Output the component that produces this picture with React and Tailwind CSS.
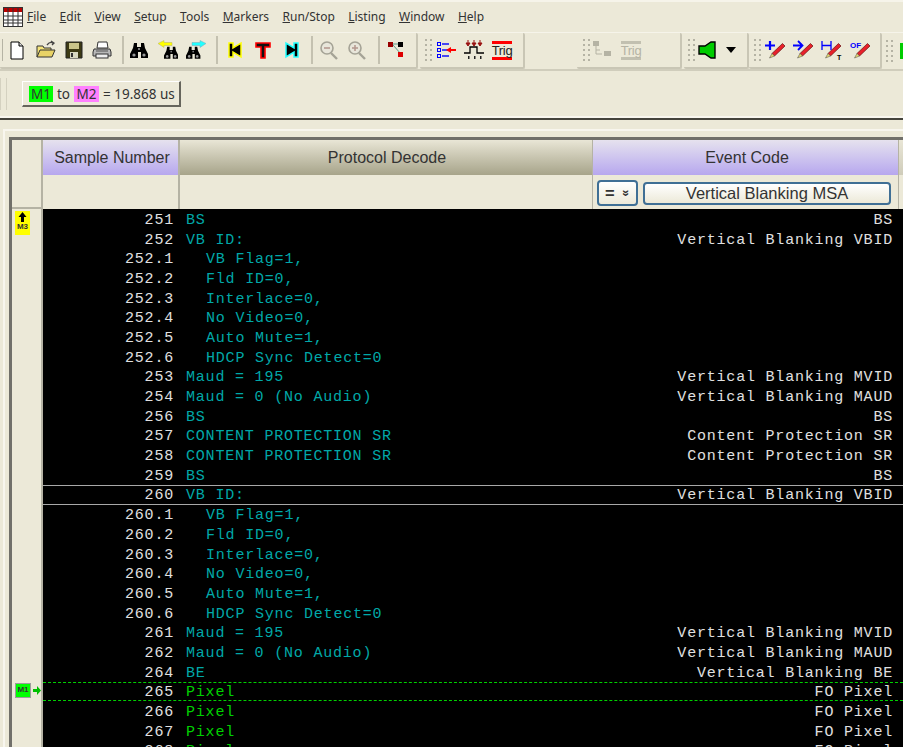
import { Fragment } from 'react';

const menus = [
    ['F', 'ile'], ['E', 'dit'], ['V', 'iew'], ['S', 'etup'], ['T', 'ools'],
    ['M', 'arkers'], ['R', 'un/Stop'], ['L', 'isting'], ['W', 'indow'], ['H', 'elp'],
];

const rows = [
    ['251', 'BS', 'BS'],
    ['252', 'VB ID:', 'Vertical Blanking VBID'],
    ['252.1', 'VB Flag=1,', '', true],
    ['252.2', 'Fld ID=0,', '', true],
    ['252.3', 'Interlace=0,', '', true],
    ['252.4', 'No Video=0,', '', true],
    ['252.5', 'Auto Mute=1,', '', true],
    ['252.6', 'HDCP Sync Detect=0', '', true],
    ['253', 'Maud = 195', 'Vertical Blanking MVID'],
    ['254', 'Maud = 0 (No Audio)', 'Vertical Blanking MAUD'],
    ['256', 'BS', 'BS'],
    ['257', 'CONTENT PROTECTION SR', 'Content Protection SR'],
    ['258', 'CONTENT PROTECTION SR', 'Content Protection SR'],
    ['259', 'BS', 'BS'],
    ['260', 'VB ID:', 'Vertical Blanking VBID', false, 'selected'],
    ['260.1', 'VB Flag=1,', '', true],
    ['260.2', 'Fld ID=0,', '', true],
    ['260.3', 'Interlace=0,', '', true],
    ['260.4', 'No Video=0,', '', true],
    ['260.5', 'Auto Mute=1,', '', true],
    ['260.6', 'HDCP Sync Detect=0', '', true],
    ['261', 'Maud = 195', 'Vertical Blanking MVID'],
    ['262', 'Maud = 0 (No Audio)', 'Vertical Blanking MAUD'],
    ['264', 'BE', 'Vertical Blanking BE'],
    ['265', 'Pixel', 'FO Pixel', false, 'marker'],
    ['266', 'Pixel', 'FO Pixel', false, 'pixel'],
    ['267', 'Pixel', 'FO Pixel', false, 'pixel'],
    ['268', 'Pixel', 'FO Pixel', false, 'pixel'],
];

// Dotted grab handle at the start of each toolbar
const Grip = ({ className = '' }) => (
    <svg width="7" height="24" className={`shrink-0 ${className}`}>
        {[2, 7, 12, 17, 22].map((y) => (
            <Fragment key={y}>
                <rect x="0" y={y - 1} width="2" height="2" fill="#b5b3a4" />
                <rect x="5" y={y - 1} width="2" height="2" fill="#b5b3a4" />
            </Fragment>
        ))}
    </svg>
);

const Sep = ({ className = '' }) => <div className={`w-[2px] h-[28px] bg-[#c4c1b0] shrink-0 ${className}`}></div>;

const Ico = ({ w = 20, children, className = '' }) => (
    <svg width={w} height="20" viewBox={`0 0 ${w} 20`} className={`shrink-0 ${className}`}>{children}</svg>
);

const NewDoc = ({ className }) => (
    <Ico w={14} className={className}><path d="M1 2h8l4 4v13H1z" fill="#fff" stroke="#000" /><path d="M9 2v4h4" fill="#ddd" stroke="#000" /></Ico>
);
const OpenDoc = ({ className }) => (
    <Ico className={className}>
        <path d="M1 17V6h6l1 2h7v2" fill="#f5e47a" stroke="#333" />
        <path d="M1 17l3-7h15l-3 7z" fill="#e8d266" stroke="#333" />
        <path d="M11 5q3-4 6-2M15 1l3 2-2 2" fill="none" stroke="#444" strokeWidth="1.3" />
    </Ico>
);
const Save = ({ className }) => (
    <Ico w={18} className={className}>
        <path d="M1 2h16v16H1z" fill="#3d3a14" stroke="#222" />
        <rect x="4" y="3" width="10" height="6" fill="#c9c48a" />
        <rect x="5" y="12" width="8" height="6" fill="#d8d8c0" />
        <rect x="6" y="13" width="2" height="4" fill="#333" />
    </Ico>
);
const Print = ({ className }) => (
    <Ico className={className}>
        <path d="M6 2h9l1 6H5z" fill="#fff" stroke="#333" />
        <path d="M2 9h16l1 3v4H1v-4z" fill="#b8b8b8" stroke="#333" />
        <rect x="4" y="14" width="12" height="4" fill="#eee" stroke="#333" />
        <path d="M4 11h12" stroke="#555" />
    </Ico>
);
// Two barrels on a narrow bridge, big round lenses below
const Binoc = ({ x = 0, y = 0, s = 1 }) => (
    <g transform={`translate(${x} ${y}) scale(${s})`}>
        <path d="M4 1h3v4h4V1h3l1 5 3 6v4h-7v-6H8v6H0v-4l3-6z" fill="#000" />
        <circle cx="4" cy="13" r="1.600" fill="#9a9a9a" />
        <circle cx="14" cy="13" r="1.600" fill="#9a9a9a" />
        <rect x="8" y="6" width="2" height="2" fill="#777" />
    </g>
);
const FindBack = ({ className }) => (
    <Ico className={className}><Binoc x={6} y={6} s={0.8} /><path d="M0 3.500l6-3v2h8v3H6v2z" fill="#ff0" stroke="#b5b36a" strokeWidth="0.5" /></Ico>
);
const FindNext = ({ className }) => (
    <Ico className={className}><Binoc x={0} y={6} s={0.8} /><path d="M20 3.500l-6-3v2H6v3h8v2z" fill="#2ff" stroke="#7ab" strokeWidth="0.5" /></Ico>
);
const JumpFirst = ({ className }) => (
    <Ico w={16} className={className}><path d="M2 3h4v5l8-5v14l-8-5v5H2z" fill="#000" stroke="#ff0" strokeWidth="1.5" /></Ico>
);
const JumpTrig = ({ className }) => (
    <Ico w={16} className={className}><path d="M1 3h14v4h-5v11H6V7H1z" fill="#111" stroke="#f00" strokeWidth="1.6" /></Ico>
);
const JumpLast = ({ className }) => (
    <Ico w={16} className={className}><path d="M14 3h-4v5L2 3v14l8-5v5h4z" fill="#000" stroke="#2ff" strokeWidth="1.5" /></Ico>
);
const Zoom = ({ plus, className }) => (
    <Ico w={18} className={className}>
        <circle cx="7" cy="8" r="6" fill="#e8e6da" stroke="#a5a396" strokeWidth="1.6" />
        <path d="M11 13l6 6" stroke="#a5a396" strokeWidth="2.4" />
        <path d="M4 8h6" stroke="#b59a90" strokeWidth="1.6" />
        {plus && <path d="M7 5v6" stroke="#b59a90" strokeWidth="1.6" />}
    </Ico>
);
const Nodes = ({ className }) => (
    <Ico w={16} className={className}>
        <path d="M3 4l10 0M5 5l8 9" stroke="#5a9a8a" />
        <rect x="0" y="2" width="5" height="5" fill="#900" />
        <rect x="10" y="2" width="5" height="5" fill="#000" />
        <rect x="10" y="12" width="5" height="5" fill="#d00" />
    </Ico>
);
const Steps = ({ className }) => (
    <Ico className={className}>
        {[4, 10, 16].map((y) => (
            <Fragment key={y}>
                <rect x="1.500" y={y - 1.5} width="3" height="3" fill="none" stroke="#00f" />
                <path d={`M6 ${y}h7`} stroke="#00f" strokeWidth="1.4" />
            </Fragment>
        ))}
        <path d="M10 10l5-3v2h5v2h-5v2z" fill="#f00" />
    </Ico>
);
const Pulse = ({ className }) => (
    <Ico className={className}>
        <path d="M0 13h6V7h7v6h7" fill="none" stroke="#000" strokeWidth="1.3" />
        {[4, 10, 16].map((x) => (
            <path key={x} d={`M${x} 0v3M${x - 2} 3l2 3 2-3z`} stroke="#911" fill="#911" />
        ))}
        {[4, 10, 16].map((x) => <rect key={x} x={x} y="16" width="1.500" height="3" fill="#222" />)}
    </Ico>
);
const TrigIco = ({ gray, className = '' }) => (
    <span className={`w-[20px] h-[19px] shrink-0 flex items-center justify-center text-[13px] tracking-[-0.3px] leading-none border-y-[3px] ${gray ? 'text-[#b5b3a4] border-[#c2c0b0]' : 'text-[#222] border-[#f00]'} ${className}`}>Trig</span>
);
const GrayTree = ({ className }) => (
    <Ico className={className}>
        <rect x="1" y="1" width="6" height="5" fill="#b5b3a4" />
        <path d="M4 6v8h6M4 10h4" stroke="#b5b3a4" fill="none" />
        <rect x="12" y="11" width="7" height="5" fill="#b5b3a4" />
    </Ico>
);
const Speaker = ({ className }) => (
    <Ico w={18} className={className}><path d="M1 6h6l6-4h4v16h-4l-6-4H1z" fill="#0c0" stroke="#000" strokeWidth="1.4" /></Ico>
);
// Slim red pencil, tip low on the left
const Pencil = () => (
    <g>
        <path d="M17.500 3.500l2.500 2.500L9.500 16 7 13.500z" fill="#e8202a" stroke="#611" strokeWidth="0.7" />
        <path d="M7 13.500l2.500 2.500L4.500 18z" fill="#e8d870" stroke="#444" strokeWidth="0.5" />
    </g>
);
const PenPlus = ({ className }) => (
    <Ico w={21} className={className}><path d="M5 1v9M0 5.500h10" stroke="#00f" strokeWidth="2.200" /><Pencil /></Ico>
);
const PenArrow = ({ className }) => (
    <Ico w={21} className={className}><path d="M0 5.500h9M5 1l4.500 4.500L5 10" fill="none" stroke="#00f" strokeWidth="1.800" /><Pencil /></Ico>
);
const PenWidth = ({ className }) => (
    <Ico w={22} className={className}>
        <path d="M1 1v9M10 1v9M1 5.500h9" stroke="#00f" strokeWidth="1.300" />
        <Pencil />
        <text x="16" y="20" fontSize="7" fontWeight="700" fontFamily="Liberation Sans" fill="#000">T</text>
    </Ico>
);
const PenOf = ({ className }) => (
    <Ico w={21} className={className}>
        <text x="0" y="8" fontSize="8" fontWeight="700" fontFamily="Liberation Sans" fill="#00f">OF</text>
        <Pencil />
    </Ico>
);

const Bar = ({ className = '', children }) => (
    <div className={`h-[36px] flex items-center shrink-0 rounded-[2px] border-b-2 border-r-2 border-[#c9c6b5] ${className}`}>{children}</div>
);

const App = () => {
    return (
        <div className="w-[903px] h-[747px] overflow-hidden bg-[#ece9d8] text-[#222] font-['Liberation_Sans',sans-serif] flex flex-col">
            {/* Menu bar */}
            <div className="h-[32px] flex items-center pl-[3px] border-t-2 border-[#f6f4ea] shrink-0">
                <svg width="21" height="21" className="shrink-0 mr-[3px]">
                    <rect x="0.500" y="0.500" width="19" height="19" fill="#fff" stroke="#333" />
                    <rect x="1" y="1" width="18" height="4" fill="#b00" />
                    {[9, 13, 16].map((y) => <path key={y} d={`M1 ${y}h18`} stroke="#333" />)}
                    {[5, 10, 15].map((x) => <path key={x} d={`M${x} 1v18`} stroke="#333" />)}
                </svg>
                <div className="flex gap-[13.400px] font-['Noto_Sans',sans-serif] text-[12px] text-[#333] leading-none">
                    {menus.map(([key, rest]) => (
                        <span key={key}><span className="underline">{key}</span>{rest}</span>
                    ))}
                </div>
            </div>

            {/* Toolbars */}
            <div className="h-[39px] flex items-center shrink-0 border-t border-[#f6f4ea] border-b-2 border-b-[#d0cdbc] overflow-hidden">
                <Bar className="w-[418px]">
                    <div className="w-[3px] h-[22px] border-r border-[#b5b3a4] shrink-0"></div>
                    <NewDoc className="ml-[7px]" />
                    <OpenDoc className="ml-[12px]" />
                    <Save className="ml-[9px]" />
                    <Print className="ml-[9px]" />
                    <Sep className="ml-[10px]" />
                    <Ico w={18} className="ml-[6px]"><Binoc y={2} /></Ico>
                    <FindBack className="ml-[10px]" />
                    <FindNext className="ml-[8px]" />
                    <Sep className="ml-[10px]" />
                    <JumpFirst className="ml-[9px]" />
                    <JumpTrig className="ml-[12px]" />
                    <JumpLast className="ml-[13px]" />
                    <Sep className="ml-[11px]" />
                    <Zoom className="ml-[7px]" />
                    <Zoom plus className="ml-[10px]" />
                    <Sep className="ml-[12px]" />
                    <Nodes className="ml-[8px]" />
                </Bar>
                <Bar className="w-[105px] ml-[2px] pl-[5px]">
                    <Grip />
                    <Steps className="ml-[4px]" />
                    <Pulse className="ml-[8px]" />
                    <TrigIco className="ml-[8px]" />
                </Bar>
                <Bar className="w-[105px] ml-[52px] pl-[6px]">
                    <Grip />
                    <GrayTree className="ml-[2px]" />
                    <TrigIco gray className="ml-[9px]" />
                </Bar>
                <Bar className="w-[65px] ml-[2px] pl-[4px]">
                    <Grip />
                    <Speaker className="ml-[3px]" />
                    <svg width="10" height="6" className="ml-[10px] shrink-0"><path d="M0 0h10L5 6z" fill="#000" /></svg>
                </Bar>
                <Bar className="w-[133px] ml-[0px] pl-[5px]">
                    <Grip />
                    <PenPlus className="ml-[4px]" />
                    <PenArrow className="ml-[7px]" />
                    <PenWidth className="ml-[7px]" />
                    <PenOf className="ml-[7px]" />
                </Bar>
                <div className="flex items-center ml-[4px] shrink-0">
                    <Grip />
                    <div className="ml-[7px] w-[4px] h-[16px] bg-[#0c0]"></div>
                </div>
            </div>

            {/* Marker measurement strip */}
            <div className="h-[49px] flex items-center shrink-0 border-b-2 border-b-[#45443c] shadow-[inset_0_-2px_0_#f8f6ee] pb-[2px]">
                <div className="w-[7px] h-[32px] border-x border-[#d4d1c0] shrink-0"></div>
                <div className="ml-[15px] w-[159px] h-[26px] flex items-center pl-[6px] pt-[3px] pb-[1px] gap-[4px] font-['Noto_Sans',sans-serif] text-[13.500px] text-[#333] border-t border-l border-t-[#fff] border-l-[#fff] border-r-2 border-b-2 border-r-[#66655c] border-b-[#66655c]">
                    <span className="bg-[#00ff00] w-[24px] h-[16px] flex items-center justify-center">M1</span>
                    <span>to</span>
                    <span className="bg-[#ff80ff] w-[25px] h-[16px] flex items-center justify-center">M2</span>
                    <span>= 19.868 us</span>
                </div>
            </div>

            {/* Listing panel */}
            <div className="flex-1 pt-[9px] pl-[3px] min-h-0">
                <div className="h-full border-t-2 border-l-2 border-[#f8f6ee] pt-[6px] pl-[4px]">
                    <div className="h-full border-t-[3px] border-l-[3px] border-[#71706a] flex flex-col">
                        {/* Column headers and filters */}
                        <div className="flex h-[69px] shrink-0 text-[#333]">
                            <div className="w-[31px] shrink-0 border-r-2 border-b-2 border-[#b5b3a4]"></div>
                            <div className="w-[137px] shrink-0 border-r-2 border-[#b5b3a4]">
                                <div className="h-[35px] flex items-center justify-center pl-[3px] text-[16px] bg-gradient-to-b from-[#e6e2ee] to-[#b7a7ee]">Sample Number</div>
                            </div>
                            <div className="w-[413px] shrink-0 border-r border-[#b5b3a4]">
                                <div className="h-[35px] flex items-center justify-center pl-[2px] text-[16px] bg-gradient-to-b from-[#e9e6d6] to-[#a7a48a]">Protocol Decode</div>
                            </div>
                            <div className="w-[306px] shrink-0 border-r border-[#b5b3a4]">
                                <div className="h-[35px] flex items-center justify-center pl-[3px] text-[16px] bg-gradient-to-b from-[#e6e2ee] to-[#b7a7ee]">Event Code</div>
                                <div className="flex items-center pl-[4px] pt-[5px] gap-[5px] text-[16.500px]">
                                    <div className="w-[41px] h-[26px] flex items-center justify-between px-[6px] rounded-[4px] border-2 border-[#3f6f95] bg-gradient-to-b from-[#ffffff] to-[#ece9d8] font-bold">
                                        <span className="leading-none">=</span>
                                        <span className="text-[12px] leading-none rotate-90">»</span>
                                    </div>
                                    <div className="w-[248px] h-[23px] flex items-center justify-center rounded-[4px] border-2 border-[#3f6f95] bg-gradient-to-b from-[#ffffff] to-[#ece9d8]">Vertical Blanking MSA</div>
                                </div>
                            </div>
                            <div className="flex-1">
                                <div className="h-[35px] bg-gradient-to-b from-[#e9e6d6] to-[#cfccba]"></div>
                            </div>
                        </div>

                        {/* Decoded rows */}
                        <div className="flex-1 min-h-0 font-['Liberation_Mono',monospace] text-[15px] tracking-[0.8px] leading-none">
                            {rows.map(([num, text, event, indent, kind]) => (
                                <div key={num} className={`flex h-[19.690px] relative ${kind === 'selected' ? 'z-10' : ''}`}>
                                    <div className="w-[31px] shrink-0 border-r-2 border-[#b5b3a4]"></div>
                                    {num === '251' && (
                                        <div className="absolute left-[3px] top-[2px] w-[15px] h-[24px] bg-[#ffff00] flex flex-col items-center z-10 font-['Liberation_Sans',sans-serif] text-[8px] font-bold tracking-normal text-[#333]">
                                            <svg width="11" height="11"><path d="M5.500 1l4 5H7v5H4V6H1.500z" fill="#000" /></svg>
                                            <span className="mt-[1px]">M3</span>
                                        </div>
                                    )}
                                    {kind === 'marker' && (
                                        <div className="absolute left-[3px] top-[1px] flex items-center z-10">
                                            <div className="w-[16px] h-[15px] bg-[#00ff00] border border-[#9c9c9c] flex items-center justify-center font-['Liberation_Sans',sans-serif] text-[8px] font-bold tracking-normal text-[#333]">M1</div>
                                            <svg width="8" height="9" className="ml-[2px]"><path d="M0 3h4V0l4 4.500L4 9V6H0z" fill="#00c000" /></svg>
                                        </div>
                                    )}
                                    <div className={`flex-1 flex items-center pt-[3px] bg-black ${kind === 'selected' ? 'shadow-[inset_0_1px_0_#a8a8a8,0_1px_0_#a8a8a8]' : ''} ${kind === 'marker' ? 'border-y border-dashed border-[#00d000]' : ''}`}>
                                        <span className="w-[131px] shrink-0 text-right text-[#e0e0e0]">{num}</span>
                                        <span className={`ml-[12px] whitespace-pre ${indent ? 'pl-[20px]' : ''} ${kind === 'marker' || kind === 'pixel' ? 'text-[#00d000]' : 'text-[#00a8a8]'}`}>{text}</span>
                                        <span className="ml-auto mr-[10px] text-[#e0e0e0]">{event}</span>
                                    </div>
                                </div>
                            ))}
                        </div>
                    </div>
                </div>
            </div>
        </div>
    );
};

export default App;
